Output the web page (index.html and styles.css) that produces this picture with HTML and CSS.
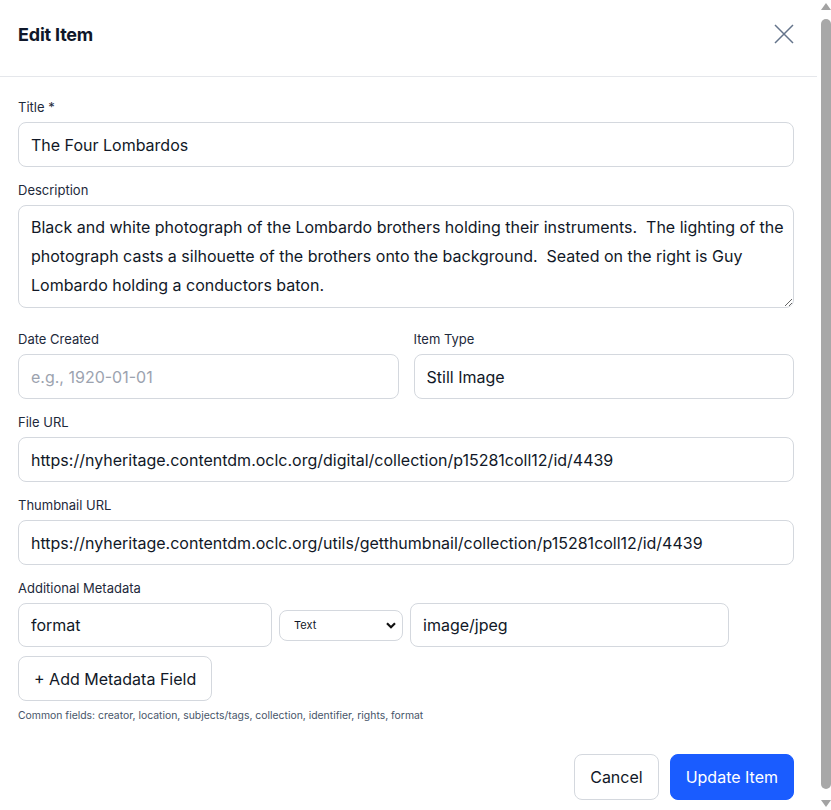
FILE: index.html
```html
<!DOCTYPE html>
<html lang="en">

<head>
    <meta charset="UTF-8" />
    <title>Edit Item</title>
    <link rel="stylesheet" href="styles.css">
</head>

<body>
    <div class="modal">
        <!-- header -->
        <div class="modal-head">
            <h2>Edit Item</h2>
            <button class="close" type="button" aria-label="Close">
                <svg width="20" height="20" viewBox="0 0 20 20" fill="none" stroke="#64748b" stroke-width="1.5">
                    <path d="M1 1L19 19M19 1L1 19" />
                </svg>
            </button>
        </div>

        <!-- form -->
        <form class="modal-body">
            <div class="field">
                <label>Title *</label>
                <input type="text" value="The Four Lombardos" />
            </div>

            <div class="field field-desc">
                <label>Description</label>
                <textarea rows="3">Black and white photograph of the Lombardo brothers holding their instruments.  The lighting of the photograph casts a silhouette of the brothers onto the background.  Seated on the right is Guy Lombardo holding a conductors baton.</textarea>
            </div>

            <div class="two-col">
                <div class="field">
                    <label>Date Created</label>
                    <input type="text" placeholder="e.g., 1920-01-01" />
                </div>
                <div class="field">
                    <label>Item Type</label>
                    <input type="text" value="Still Image" />
                </div>
            </div>

            <div class="field">
                <label>File URL</label>
                <input type="text" value="https://nyheritage.contentdm.oclc.org/digital/collection/p15281coll12/id/4439" />
            </div>

            <div class="field">
                <label>Thumbnail URL</label>
                <input type="text" value="https://nyheritage.contentdm.oclc.org/utils/getthumbnail/collection/p15281coll12/id/4439" />
            </div>

            <div class="field">
                <label>Additional Metadata</label>
                <div class="meta-row">
                    <input class="meta-key" type="text" value="format" />
                    <div class="select-wrap">
                        <select class="meta-type">
                            <option>Text</option>
                        </select>
                        <svg class="chev" width="10" height="7" viewBox="0 0 10 7" fill="none" stroke="#111" stroke-width="2.2">
                            <path d="M1 1.2L5 5.2L9 1.2" />
                        </svg>
                    </div>
                    <input class="meta-val" type="text" value="image/jpeg" />
                </div>
                <button class="add-btn" type="button">+ Add Metadata Field</button>
                <p class="hint">Common fields: creator, location, subjects/tags, collection, identifier, rights, format</p>
            </div>

            <div class="actions">
                <button class="btn" type="button">Cancel</button>
                <button class="btn btn-primary" type="button">Update Item</button>
            </div>
        </form>
    </div>

    <!-- 滚动条 -->
    <div class="scrollbar">
        <span class="arrow up"></span>
        <span class="thumb"></span>
        <span class="arrow down"></span>
    </div>
</body>

</html>
```

FILE: styles.css
```css
* {
    margin: 0;
    padding: 0;
    box-sizing: border-box;
}

body {
    display: flex;
    height: 810px;
    overflow: hidden;
    font-family: Inter, "Liberation Sans", sans-serif;
    color: #0f172a;
    background: #fff;
}

.modal {
    width: 817px;
    height: 810px;
    overflow: hidden;
    background: #fff;
}

/* scrollbar */
.scrollbar {
    display: flex;
    flex-direction: column;
    align-items: center;
    width: 14px;
    padding: 3px 0 3px 3px;
    background: #fff;
}

.scrollbar .arrow {
    width: 0;
    height: 0;
    border-left: 5px solid transparent;
    border-right: 5px solid transparent;
}

.scrollbar .up {
    border-bottom: 7px solid #a3a3a3;
}

.scrollbar .down {
    border-top: 7px solid #a3a3a3;
}

.scrollbar .thumb {
    flex: 1;
    width: 10px;
    margin: 9px 0 11px;
    background: #a8a8a8;
    border-radius: 5px;
}

.modal-head {
    display: flex;
    justify-content: space-between;
    align-items: center;
    height: 77px;
    padding: 0 23px 8px 18px;
    border-bottom: 1px solid #e5e7eb;
}

.modal-head h2 {
    font-size: 18px;
    font-weight: 700;
    letter-spacing: -0.2px;
    color: #0f172a;
}

.close {
    display: flex;
    border: none;
    background: none;
    cursor: pointer;
}

.modal-body {
    padding: 22px 23px 24px 18px;
}

.field {
    display: flex;
    flex-direction: column;
    margin-bottom: 15px;
}

.field-desc {
    margin-bottom: 23px;
}

.field label {
    font-size: 13px;
    line-height: 17px;
    color: #1e293b;
    margin-bottom: 6px;
}

input,
textarea,
select {
    font-family: Inter, "Liberation Sans", sans-serif;
    color: #111827;
}

.field input,
.field textarea {
    width: 100%;
    height: 45px;
    padding: 0 12px;
    font-size: 16px;
    border: 1px solid #d4d8de;
    border-radius: 8px;
    outline: none;
    background: #fff;
}

.field input::placeholder {
    color: #9ca3af;
}

.field textarea {
    display: block;
    height: 103px;
    padding: 7px 6px 7px 12px;
    line-height: 29px;
    resize: vertical;
}

.two-col {
    display: grid;
    grid-template-columns: 1fr 1fr;
    column-gap: 15px;
}

.meta-row {
    display: flex;
    align-items: center;
    gap: 7px;
}

.field .meta-key {
    width: 254px;
    height: 44px;
}

.select-wrap {
    position: relative;
    width: 124px;
}

.meta-type {
    display: block;
    width: 100%;
    height: 31px;
    padding: 0 10px 0 14px;
    font-size: 11px;
    border: 1px solid #d4d8de;
    border-radius: 8px;
    background: #fff;
    appearance: none;
    -webkit-appearance: none;
}

.chev {
    position: absolute;
    right: 7px;
    top: 12px;
    pointer-events: none;
}

.field .meta-val {
    width: 319px;
    height: 44px;
}

.add-btn {
    align-self: flex-start;
    margin-top: 9px;
    height: 45px;
    padding: 0 15px;
    font-family: Inter, "Liberation Sans", sans-serif;
    font-size: 16px;
    color: #111827;
    background: #fff;
    border: 1px solid #d4d8de;
    border-radius: 8px;
}

.hint {
    margin-top: 8px;
    font-size: 10.4px;
    line-height: 14px;
    color: #475569;
}

.actions {
    display: flex;
    justify-content: flex-end;
    gap: 11px;
    margin-top: 31px;
}

.btn {
    height: 46px;
    padding: 0 15px;
    font-family: Inter, "Liberation Sans", sans-serif;
    font-size: 16px;
    color: #111827;
    background: #fff;
    border: 1px solid #d4d8de;
    border-radius: 8px;
    cursor: pointer;
}

.btn-primary {
    padding: 0 15px;
    color: #fff;
    background: #1a5cff;
    border-color: #1a5cff;
}
```
